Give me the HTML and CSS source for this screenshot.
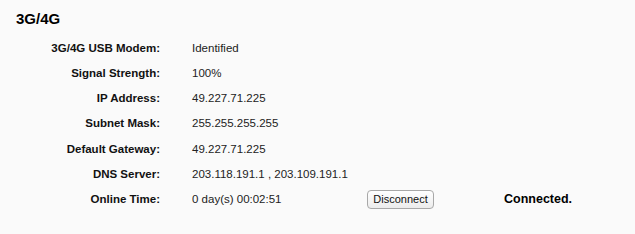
FILE: index.html
```html
<!DOCTYPE html>
<html lang="en">
  <head>
    <meta charset="UTF-8" />
    <title>3G/4G Status</title>
    <link rel="stylesheet" href="styles.css">
  </head>
  <body>
    <section class="status-box">
      <h2 class="status-title">3G/4G</h2>
      <div class="status-grid">
        <div class="label">3G/4G USB Modem:</div>
        <div class="value">Identified</div>
        <div></div><div></div>

        <div class="label">Signal Strength:</div>
        <div class="value">100%</div>
        <div></div><div></div>

        <div class="label">IP Address:</div>
        <div class="value">49.227.71.225</div>
        <div></div><div></div>

        <div class="label">Subnet Mask:</div>
        <div class="value">255.255.255.255</div>
        <div></div><div></div>

        <div class="label">Default Gateway:</div>
        <div class="value">49.227.71.225</div>
        <div></div><div></div>

        <div class="label">DNS Server:</div>
        <div class="value">203.118.191.1 , 203.109.191.1</div>
        <div></div><div></div>

        <div class="label">Online Time:</div>
        <div class="value">0 day(s) 00:02:51</div>
        <div><button type="button" class="btn">Disconnect</button></div>
        <div class="conn-state">Connected.</div>
      </div>
    </section>
  </body>
</html>
```

FILE: styles.css
```css
body {
  margin: 0;
  background: #fafafa;
  font-family: "Liberation Sans", Arial, sans-serif;
  color: #111;
}
.status-box {
  padding: 10px 0 0 0;
}
.status-title {
  margin: 0 0 0 16px;
  font-size: 15px;
  font-weight: 700;
  line-height: 18px;
  color: #000;
}
.status-grid {
  display: grid;
  grid-template-columns: 192px 174px 138px auto;
  grid-auto-rows: 25.25px;
  align-items: center;
  margin-top: 7px;
  font-size: 11.5px;
}
.label {
  text-align: right;
  padding-right: 32px;
  font-weight: 700;
  color: #111;
}
.value {
  color: #222;
  white-space: nowrap;
}
.btn {
  margin-left: 1px;
  width: 67px;
  height: 19px;
  padding: 0;
  font-family: "Liberation Sans", Arial, sans-serif;
  font-size: 11px;
  color: #111;
  background: linear-gradient(#ffffff, #ececec);
  border: 1px solid #a8a8a8;
  border-radius: 4px;
}
.conn-state {
  font-size: 12.5px;
  font-weight: 700;
  color: #000;
}
```
